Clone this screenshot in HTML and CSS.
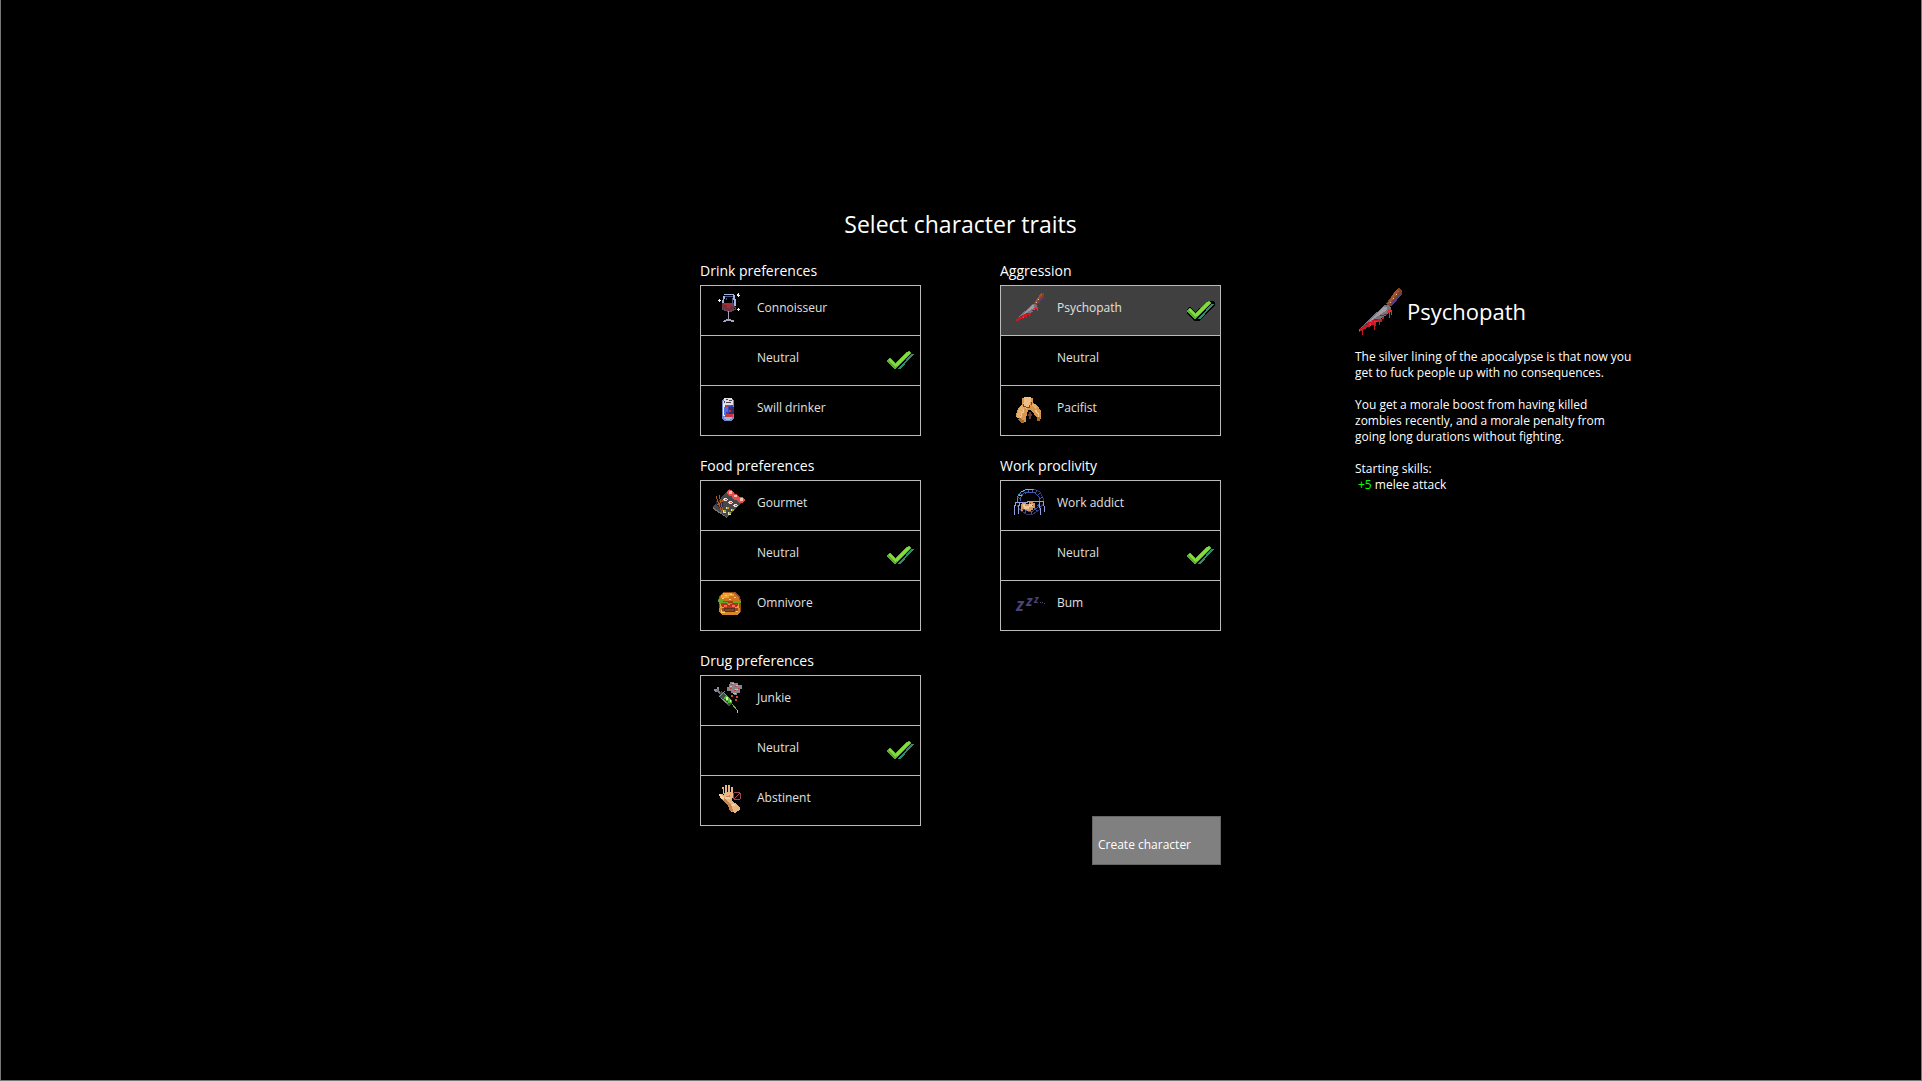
FILE: index.html
```html
<!DOCTYPE html>
<html lang="en">
<head>
    <meta charset="UTF-8">
    <meta name="viewport" content="width=device-width, initial-scale=1.0">
    <title>Select character traits</title>
    <link rel="stylesheet" href="styles.css">
</head>
<body>
    <!-- Shared icons -->
    <svg class="sprites" aria-hidden="true">
        <symbol id="check" viewBox="0 0 28 20">
            <path d="M0 8l3-2 5 5L22 0h4l2 2v2L13 20H7l-7-7z" fill="#000"/>
            <path d="M12 18L26 3" stroke="#2f8c70" stroke-width="2"/>
            <path d="M0 9l2-2h1l5 5L20 1l2-1 2 2L9 18H7l-7-7z" fill="#5caf30"/>
            <path d="M1 9l2-1 5 5L21 1h1l1 1L10 15 8 16z" fill="#84dc3a"/>
        </symbol>
        <symbol id="wine" viewBox="0 0 32 32">
            <path d="M9 11h13v4l-2 3-3 1h-3l-4-2-1-3z" fill="#70303c"/>
            <path d="M11 11h9v3h-3v2h-3v-3h-3z" fill="#a82c32"/>
            <path d="M9 15v2h2v1h3v1h4v-1h2v-1h2v-2" stroke="#594763" fill="none"/>
            <path d="M11 2h10v1H11zM10 4h2v3h-1v4H9V8h1zM20 3h2v4h1v7h-2V8h-1z" fill="#a6b6e0"/>
            <path d="M12 4h8v1h-8zM13 6h1v2h-1zM19 6h1v8h-1z" fill="#4e587a"/>
            <path d="M15 19h1v9h-1z" fill="#a79cb8"/>
            <path d="M13 27h5v1h3v2h-3v-1h-5v1h-3v-1h1v-1h2z" fill="#a9a2bb"/>
            <path d="M6 7h1v1h1v1H7v1H6V9H5V8h1zM25 1h1v2h1v1h-1v1h-1V4h-1V2h1zM25 16h1v1h1v1h-1v1h-1v-1h-1v-1h1z" fill="#f4f4ff"/>
        </symbol>
        <symbol id="can" viewBox="0 0 32 32">
            <path d="M11 6h8l2 3v17l-2 3h-8l-2-3V9z" fill="#7187c8"/>
            <path d="M11 6h8v2l1 1v4H10V9l1-1z" fill="#e6dfe4"/>
            <path d="M13 7h2v1h-2zM16 8h3v1h-3zM13 10h5v1h-5zM11 9h1v2h-1z" fill="#4b4455"/>
            <path d="M12 13h8v6l-2 5h-6z" fill="#3d43ae"/>
            <path d="M16 15h5v7h-5z" fill="#342f68"/>
            <path d="M12 13h6v1h-3v2h-2v-2h-1zM12 22h8v3h-8zM16 18h2v2h-2z" fill="#c8353c"/>
            <path d="M10 12h2v12h-2z" fill="#edf1ff"/>
            <path d="M11 15h4v5h-2v3h-2z" fill="#4c6fe1"/>
            <path d="M11 25h8v2h-2v1h-4v-1h-2z" fill="#9bb7ee"/>
        </symbol>
        <symbol id="sushi" viewBox="0 0 32 32">
            <path d="M16 2l15 11-17 18L0 20z" fill="#474649"/>
            <path d="M0 20l14 10v1L0 22z" fill="#77706f"/>
            <path d="M15 3h4l2 3-2 3h-3l-2-3zM20 7h4l2 3-2 3h-3l-2-3zM26 10h4l2 3-3 3h-3l-2-3z" fill="#e74c45"/>
            <path d="M16 4h3v3h-3zM21 8h3v2h-3zM27 11h3v3h-3z" fill="#ffbcb2"/>
            <path d="M11 11h3l1 2-2 1h-2l-1-1zM16 14h3l1 2-2 1h-2l-1-1zM21 17h3l1 2-2 1h-2l-1-1z" fill="#eee0dd"/>
            <path d="M12 12h2v1h-2zM17 15h2v1h-2zM22 18h2v1h-2z" fill="#d94841"/>
            <path d="M13 20h3v2h-3zM18 22h3v2h-3zM10 23h3v3h-3zM15 25h3v3h-3z" fill="#dfdfbb"/>
            <path d="M14 20h2v2h-2zM19 22h2v2h-2zM11 23h2v2h-2zM16 25h2v2h-2z" fill="#a6a01c"/>
            <path d="M3 14h7v7H7l-4-3z" fill="#2c2338"/>
            <path d="M3 9l6 17M6 8l4 16M4 18l7-5" stroke="#a55d25" fill="none"/>
        </symbol>
        <symbol id="burger" viewBox="0 0 32 32">
            <path d="M10 5h12l4 3 2 5v11l-3 4H9l-3-3V15l-1-2 2-5z" fill="#964914"/>
            <path d="M10 6h11l4 3 2 5H6l1-5z" fill="#cc741f"/>
            <path d="M10 6h9v1h2v2h-5v2H8V8h2z" fill="#eda22c"/>
            <path d="M12 8h2v1h-2zM17 7h2v1h-2zM21 10h2v1h-2zM9 11h2v1H9zM16 12h2v1h-2z" fill="#ffd55b"/>
            <path d="M5 13h5v2h5v1h5v-2h8v2h-2v2h-4v-1h-6v2H9v-2H6z" fill="#62aa26"/>
            <path d="M7 17h19v4H7z" fill="#dba62f"/>
            <path d="M8 16h5l3 2 4-2h5v3l-4 2h-9l-4-2z" fill="#b33126"/>
            <path d="M11 18h3v2h-3zM19 18h3v2h-3z" fill="#ff6b45"/>
            <path d="M11 21h11v4H11z" fill="#5b2f1b"/>
            <path d="M12 22h9v2h-9z" fill="#844421"/>
            <path d="M6 21h3v3h3v1h10v-1h3v-3h2v4l-3 3H9l-3-3z" fill="#d8862d"/>
            <path d="M8 23h1v2h3v1H8zM23 24h2v1h-2z" fill="#f9d64e"/>
        </symbol>
        <symbol id="syringe" viewBox="0 0 32 32">
            <path d="M17 0h4v1h4v2h4v4h-2v4h-3v2h-3v-2h-3V9h-4V5h2z" fill="#88848b"/>
            <path d="M18 2h2v1h-2zM22 4h2v1h-2zM17 6h2v1h-2zM21 8h2v1h-2zM25 6h2v1h-2z" fill="#c34246"/>
            <path d="M19 1h2v1h-2zM23 3h2v1h-2zM17 4h2v1h-2zM22 7h3v1h-3zM20 11h3v1h-3z" fill="#c2bdc5"/>
            <path d="M1 7h3V5h2v3H4v2H2V9H1z" fill="#8b9097"/>
            <path d="M4 8l5 5" stroke="#717780" stroke-width="2"/>
            <path d="M8 9l11 10v3l-3 2-10-9z" fill="#3e4e48"/>
            <path d="M6 15L12 9M8 16l7 6M10 10l8 8" stroke="#8b9599" fill="none"/>
            <path d="M12 14h3v2h2v2h2v3h-4v-2h-2v-2h-2z" fill="#57b834"/>
            <path d="M13 15h2v3h-2zM17 18h1v2h-1z" fill="#c8ff9c"/>
            <path d="M19 22l5 6" stroke="#73ac38"/>
            <path d="M24 28h1v3h-1z" fill="#c1dc3c"/>
            <path d="M18 13h2v2h-2zM23 14h2v2h-2zM22 17h2v2h-2z" fill="#d64825"/>
        </symbol>
        <symbol id="hand" viewBox="0 0 32 32">
            <path d="M9 5h2v6h1V3h2v7h1V3h2v7h1V5h2v9l-1 5 3 2 5 5v2l-5 3-5-2-2-6-3-3-4-3-1-5h2l2 2z" fill="#e7b684"/>
            <path d="M8 17l4 4 3 2 2 6 3 1v-2l-2-5-3-4-4-3z" fill="#c8844a"/>
            <path d="M6 12h2l3 4v2l-4-2zM12 15h5v2h-5zM19 22h3v2h-3z" fill="#f6d0a0"/>
            <path d="M13 14h3v-1h1v2h-4z" fill="#bb8250"/>
            <circle cx="24" cy="14" r="4" fill="none" stroke="#944960"/>
            <path d="M21 17l6-6" stroke="#bd4355"/>
        </symbol>
        <symbol id="knife" viewBox="0 0 48 48">
            <path d="M41 3l3-2 3 2v3l-9 12-3 1-4-2z" fill="#824125"/>
            <path d="M41 3l2-1 1 2-9 12-3 1z" fill="#a3542f"/>
            <path d="M46 5h1v2L38 18h-2l1-3z" fill="#5c3c81"/>
            <path d="M41 7h1v1h-1zM38 11h1v1h-1zM35 15h1v1h-1z" fill="#d9c5a9"/>
            <path d="M30 18h3l3 3v3l-6 5-13 9-13 7v-2l10-11z" fill="#77747d"/>
            <path d="M29 20h3v3L17 33l-4 2z" fill="#9f9ca2"/>
            <path d="M4 45l7-9 5 1-6 5z" fill="#743036"/>
            <path d="M13 35h4v-2h5v-1h5v-2h2v2h-2v3h-2v3h-1v-3h-3v4h-1v4h-1v-5h-4v2h-4v2H8v6H7v-5H5v-2h3v-3h5z" fill="#c91926"/>
            <path d="M15 36h4v-2h4v1h-3v1h-4v2h-2zM33 22h3v1h1v5h-1v-3h-1v6h-1v-5h-2v-2h1z" fill="#ee2936"/>
            <path d="M29 27h3v1h-3v1h-4v-1h4zM19 32h4v1h-4z" fill="#5c3140"/>
        </symbol>
        <symbol id="prayer" viewBox="0 0 32 32">
            <path d="M9 6h3V5h6v1h2v5l4 2 4 6v6l-1 4h-3v-3l-6-8h-3l-2 8v4H9l-2-3-4-2v-3l3-7 3-3z" fill="#d6974f"/>
            <path d="M11 5h7v3l-2 7-3 2-3-4 1-4z" fill="#f0bd84"/>
            <path d="M8 13l3 2-1 4-5 8-2-2 3-8zM19 12h3l2 3-2 2-3-3z" fill="#e5ad6f"/>
            <path d="M10 17h1v4H9v4H8v3H7v-4h1v-4h2zM23 17l3 5v6h-1v-5l-3-4z" fill="#f3c48e"/>
            <path d="M5 28l4 3h2v-3H9l-2-3zM24 25h3v4h-3z" fill="#ac6b20"/>
            <path d="M10 12h1v2h2v1h3v-2h2v-3h1v3h-2v3h-4v-1h-3z" fill="#784829"/>
            <path d="M16 20h2v2h1v2h-1v3h-2v-3h-1v-2h1z" fill="#6a3735"/>
        </symbol>
        <symbol id="wheel" viewBox="0 0 32 32">
            <g fill="none">
                <path d="M4 15V10l4-5 6-3h7l6 3 3 6v6l-4 6-6 4h-7l-6-4-3-5" stroke="#333063"/>
                <path d="M4 15v-5l4-5 6-3h7" stroke="#3d96d8"/>
                <path d="M7 14v-3l4-5 5-1 6 1 4 4 1 5-2 5-5 4h-5l-6-3" stroke="#3b55a7"/>
                <path d="M4 10l4 2M6 6l4 2M10 4l3 3M15 2l1 4M20 2l-1 4M24 3l-2 4M27 6l-3 3M30 10l-4 2M30 15l-4-1M28 20l-4-2M24 24l-3-3M18 27v-3M12 26l1-3M7 23l3-2" stroke="#465a9d"/>
                <path d="M8 5l4-2 5-1h3M6 8h3" stroke="#50c6ef"/>
                <path d="M2 15h12v-1h16M3 15l-2 7v6M7 15l-2 7v5M26 15l1 6 1 7M30 14l1 5 1 6" stroke="#92a0df"/>
            </g>
            <path d="M9 16h4v1h3v-2h4v1h2v5h-2v2h-2v1h-4v-1h-4v1H8v-6z" fill="#d69761"/>
            <path d="M10 17h2v2h4v-2h4v3h-4v2h-5z" fill="#f1c799"/>
            <path d="M17 16h1v1h-1zM19 18h1v1h-1zM9 22h3v1H9z" fill="#744041"/>
        </symbol>
        <symbol id="sleep" viewBox="0 0 32 32">
            <g class="snore">
                <text x="3" y="24" font-size="17">z</text>
                <text x="13" y="19" font-size="14">z</text>
                <text x="21" y="16" font-size="10">z</text>
            </g>
            <path d="M27 15h1v1h-1zM29 15h1v1h-1zM31 16h1v1h-1z" fill="#4b4970"/>
        </symbol>
    </svg>

    <main class="page">
        <form class="traits" id="traitsForm">
            <h1>Select character traits</h1>
            <div class="columns">
                <div class="column">
                    <fieldset>
                        <legend>Drink preferences</legend>
                        <div class="options">
                            <label class="option">
                                <svg class="icon"><use href="#wine"/></svg>
                                <span>Connoisseur</span>
                                <input type="radio" name="drink" value="connoisseur">
                                <svg class="check"><use href="#check"/></svg>
                            </label>
                            <label class="option">
                                <svg class="icon"></svg>
                                <span>Neutral</span>
                                <input type="radio" name="drink" value="neutral" checked>
                                <svg class="check"><use href="#check"/></svg>
                            </label>
                            <label class="option">
                                <svg class="icon"><use href="#can"/></svg>
                                <span>Swill drinker</span>
                                <input type="radio" name="drink" value="swill">
                                <svg class="check"><use href="#check"/></svg>
                            </label>
                        </div>
                    </fieldset>

                    <fieldset>
                        <legend>Food preferences</legend>
                        <div class="options">
                            <label class="option">
                                <svg class="icon"><use href="#sushi"/></svg>
                                <span>Gourmet</span>
                                <input type="radio" name="food" value="gourmet">
                                <svg class="check"><use href="#check"/></svg>
                            </label>
                            <label class="option">
                                <svg class="icon"></svg>
                                <span>Neutral</span>
                                <input type="radio" name="food" value="neutral" checked>
                                <svg class="check"><use href="#check"/></svg>
                            </label>
                            <label class="option">
                                <svg class="icon"><use href="#burger"/></svg>
                                <span>Omnivore</span>
                                <input type="radio" name="food" value="omnivore">
                                <svg class="check"><use href="#check"/></svg>
                            </label>
                        </div>
                    </fieldset>

                    <fieldset>
                        <legend>Drug preferences</legend>
                        <div class="options">
                            <label class="option">
                                <svg class="icon"><use href="#syringe"/></svg>
                                <span>Junkie</span>
                                <input type="radio" name="drug" value="junkie">
                                <svg class="check"><use href="#check"/></svg>
                            </label>
                            <label class="option">
                                <svg class="icon"></svg>
                                <span>Neutral</span>
                                <input type="radio" name="drug" value="neutral" checked>
                                <svg class="check"><use href="#check"/></svg>
                            </label>
                            <label class="option">
                                <svg class="icon"><use href="#hand"/></svg>
                                <span>Abstinent</span>
                                <input type="radio" name="drug" value="abstinent">
                                <svg class="check"><use href="#check"/></svg>
                            </label>
                        </div>
                    </fieldset>
                </div>

                <div class="column">
                    <fieldset>
                        <legend>Aggression</legend>
                        <div class="options">
                            <label class="option active">
                                <svg class="icon"><use href="#knife"/></svg>
                                <span>Psychopath</span>
                                <input type="radio" name="aggression" value="psychopath" checked>
                                <svg class="check"><use href="#check"/></svg>
                            </label>
                            <label class="option">
                                <svg class="icon"></svg>
                                <span>Neutral</span>
                                <input type="radio" name="aggression" value="neutral">
                                <svg class="check"><use href="#check"/></svg>
                            </label>
                            <label class="option">
                                <svg class="icon"><use href="#prayer"/></svg>
                                <span>Pacifist</span>
                                <input type="radio" name="aggression" value="pacifist">
                                <svg class="check"><use href="#check"/></svg>
                            </label>
                        </div>
                    </fieldset>

                    <fieldset>
                        <legend>Work proclivity</legend>
                        <div class="options">
                            <label class="option">
                                <svg class="icon"><use href="#wheel"/></svg>
                                <span>Work addict</span>
                                <input type="radio" name="work" value="addict">
                                <svg class="check"><use href="#check"/></svg>
                            </label>
                            <label class="option">
                                <svg class="icon"></svg>
                                <span>Neutral</span>
                                <input type="radio" name="work" value="neutral" checked>
                                <svg class="check"><use href="#check"/></svg>
                            </label>
                            <label class="option">
                                <svg class="icon"><use href="#sleep"/></svg>
                                <span>Bum</span>
                                <input type="radio" name="work" value="bum">
                                <svg class="check"><use href="#check"/></svg>
                            </label>
                        </div>
                    </fieldset>

                    <button type="button" class="create">Create character</button>
                </div>
            </div>
        </form>

        <aside class="details">
            <div class="details-title">
                <svg class="big-icon"><use href="#knife"/></svg>
                <h2>Psychopath</h2>
            </div>
            <p>The silver lining of the apocalypse is that now you get to fuck people up with no consequences.</p>
            <p>You get a morale boost from having killed zombies recently, and a morale penalty from going long durations without fighting.</p>
            <p>Starting skills:</p>
            <ul>
                <li><span class="bonus">+5</span> melee attack</li>
            </ul>
        </aside>
    </main>
</body>
</html>
```
FILE: styles.css
```css
* {
    box-sizing: border-box;
}
body {
    margin: 0;
    background-color: black;
    color: white;
    font-family: "Open Sans", "Noto Sans", sans-serif;
    font-size: 12px;
    line-height: 16px;
}
h1, h2 {
    margin: 0;
    font-size: 23px;
    line-height: 30px;
    font-weight: normal;
}
h2 {
    font-size: 22px;
}
.sprites {
    display: none;
}
svg {
    flex-shrink: 0;
    shape-rendering: crispEdges;
}
.page {
    display: grid;
    grid-template-columns: 1fr auto 1fr;
    align-items: start;
    min-height: 100vh;
    padding-top: 209px;
    border: 1px solid #777;
    border-top: none;
}
.traits {
    grid-column: 2;
    padding-right: 1px;
}
.traits h1 {
    text-align: center;
}
.columns {
    display: flex;
    gap: 79px;
    margin-top: 22px;
}
.column {
    display: flex;
    flex-direction: column;
    gap: 20px;
    width: 221px;
}
.column:first-child {
    margin-bottom: 39px;
}
fieldset {
    margin: 0;
    padding: 0;
    border: none;
    min-width: 0;
}
legend {
    padding: 0;
    font-size: 14px;
    line-height: 20px;
}
.options {
    margin-top: 4px;
    border: 1px solid #bbb;
}
.option {
    display: flex;
    align-items: center;
    gap: 12px;
    height: 49px;
    padding: 0 5px 6px 12px;
    color: #e0e0e0;
    cursor: pointer;
}
.option + .option {
    height: 50px;
    border-top: 1px solid #bbb;
}
.option.active {
    background-color: #404040;
}
.option input {
    appearance: none;
    width: 0;
    height: 0;
    margin: 0 0 0 auto;
}
.icon {
    width: 32px;
    height: 32px;
}
.check {
    width: 28px;
    height: 20px;
    margin-top: 6px;
    visibility: hidden;
}
.option input:checked + .check {
    visibility: visible;
}
.snore {
    fill: #474578;
    font-family: "Noto Sans", sans-serif;
    font-style: italic;
    font-weight: bold;
}
.create {
    align-self: flex-end;
    width: 129px;
    height: 49px;
    margin-top: auto;
    padding: 8px 5px 0;
    border: 1px solid #666;
    background-color: #808080;
    color: white;
    font: inherit;
    text-align: left;
    cursor: pointer;
}
.details {
    max-width: 280px;
    margin-top: 78px;
    margin-left: 133px;
}
.details-title {
    display: flex;
    align-items: center;
    gap: 4px;
    margin-bottom: 14px;
}
.big-icon {
    width: 48px;
    height: 48px;
}
.details p {
    margin: 0 0 16px;
}
.details ul {
    margin: -16px 0 0;
    padding: 0 0 0 3px;
    list-style: none;
}
.bonus {
    color: #00ff00;
}
```
